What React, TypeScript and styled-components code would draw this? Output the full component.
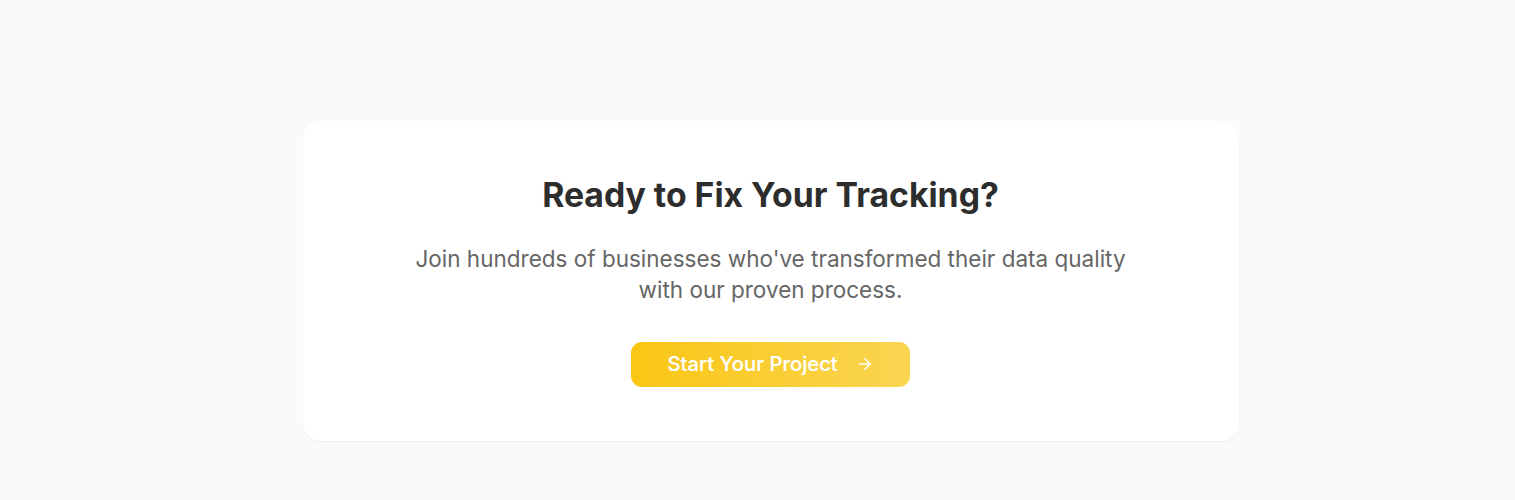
import React from "react";
import styled, { createGlobalStyle } from "styled-components";
import { ArrowRight } from "lucide-react";

const GlobalStyle = createGlobalStyle`
  * { box-sizing: border-box; }
  body { margin: 0; background: #f9fafc; font-family: Inter, sans-serif; }
`;

const Section = styled.section`
  min-height: 500px;
  padding: 121px 276px 59px 303px;
  background: #f9fafc;
`;

const Card = styled.div`
  display: flex;
  flex-direction: column;
  align-items: center;
  height: 320px;
  padding: 54px 1px 0 0;
  border-radius: 18px;
  background: #fff;
  box-shadow: 0 1px 2px rgba(0, 0, 0, 0.05);
  text-align: center;
`;

const Title = styled.h2`
  margin: 0 0 28px;
  color: #2d2d2d;
  font-size: 33.75px;
  font-weight: 700;
  line-height: 40px;
`;

const Lead = styled.p`
  width: 756px;
  margin: 0 0 37px;
  color: #666;
  font-size: 22.5px;
  line-height: 31px;
`;

const Button = styled.button`
  display: flex;
  align-items: center;
  justify-content: space-between;
  width: 279px;
  height: 45px;
  padding: 0 36px 1px 36.5px;
  border: 0;
  border-radius: 11px;
  background: linear-gradient(90deg, #f9c614, #fad552);
  color: #fff;
  font-family: inherit;
  font-size: 20.25px;
  font-weight: 500;
  white-space: nowrap;
`;

const Label = styled.span`
  line-height: 24px;
  -webkit-text-stroke: 0.2px currentColor;
`;

export default function App() {
  return (
    <Section>
      <GlobalStyle />
      <Card>
        <Title>Ready to Fix Your Tracking?</Title>
        <Lead>
          Join hundreds of businesses who've transformed their data quality with our proven process.
        </Lead>
        <Button>
          <Label>Start Your Project</Label>
          <ArrowRight size={18} strokeWidth={2} />
        </Button>
      </Card>
    </Section>
  );
}
